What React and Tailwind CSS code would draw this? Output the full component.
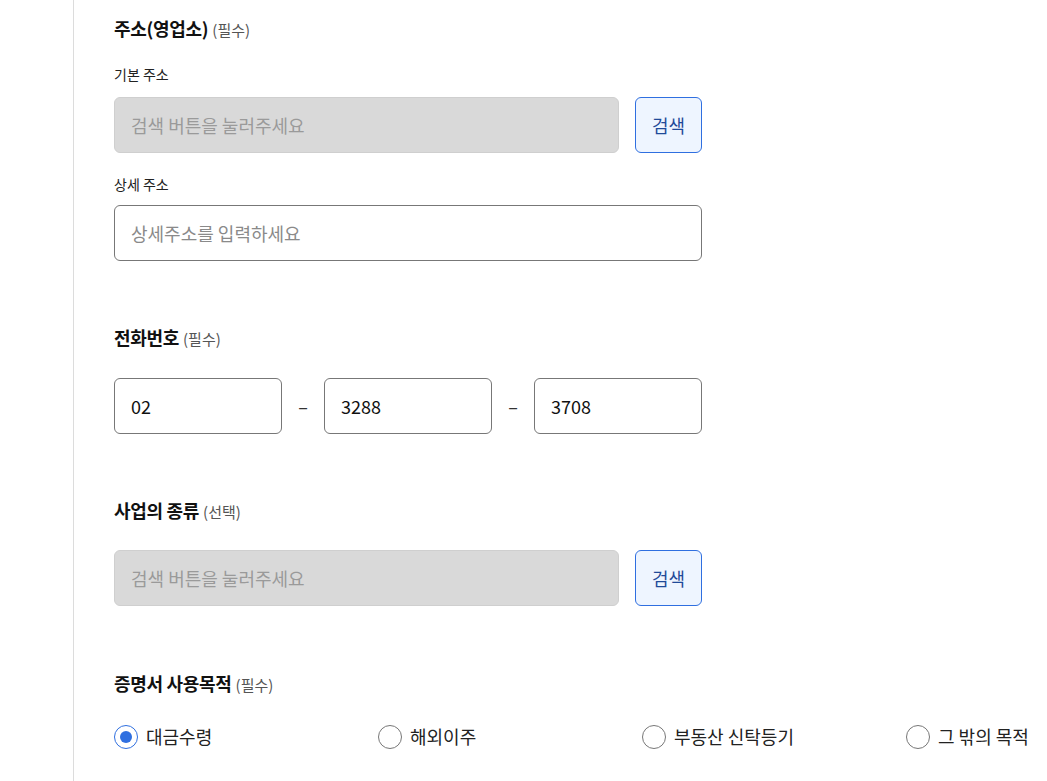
const FONT = { fontFamily: '"Noto Sans CJK KR", "Noto Sans", sans-serif' };

function SectionTitle({ title, note }) {
  return (
    <h3 className="flex items-baseline h-6 leading-6">
      <span className="text-[18px] font-bold text-[#111] tracking-[-0.3px]">{title}</span>
      <span className="ml-1 text-[15px] text-[#555]">{note}</span>
    </h3>
  );
}

function SearchRow({ placeholder }) {
  return (
    <div className="flex gap-4">
      <input
        disabled
        placeholder={placeholder}
        className="w-[505px] h-[56px] rounded-md border border-[#cfcfcf] bg-[#d9d9d9] px-4 text-[18px] placeholder:text-[#9a9a9a] outline-none"
      />
      <button className="w-[67px] h-[56px] rounded-md border border-[#2f6fe0] bg-[#eef5ff] text-[18px] text-[#1f4a99]">
        검색
      </button>
    </div>
  );
}

function Radio({ label, checked }) {
  return (
    <label className="flex items-center gap-2 text-[18px] text-[#222]">
      <span
        className={
          checked
            ? 'w-6 h-6 rounded-full border-[1.5px] border-[#2f6fe0] flex items-center justify-center bg-white'
            : 'w-6 h-6 rounded-full border-[1.5px] border-[#777] bg-white'
        }
      >
        {checked && <span className="w-3 h-3 rounded-full bg-[#2f6fe0]" />}
      </span>
      {label}
    </label>
  );
}

export default function App() {
  const phone = ['02', '3288', '3708'];
  const purposes = ['대금수령', '해외이주', '부동산 신탁등기', '그 밖의 목적'];

  return (
    <div className="w-[1047px] h-[781px] overflow-hidden bg-white" style={FONT}>
      <div className="ml-[73px] h-full border-l border-[#dcdcdc] pl-10 pt-[16px]">
        {/* 주소 */}
        <section>
          <SectionTitle title="주소(영업소)" note="(필수)" />
          <p className="mt-[24px] mb-[13px] h-5 leading-5 text-[14px] text-[#222]">기본 주소</p>
          <SearchRow placeholder="검색 버튼을 눌러주세요" />
          <p className="mt-[21px] mb-[11px] h-5 leading-5 text-[14px] text-[#222]">상세 주소</p>
          <input
            placeholder="상세주소를 입력하세요"
            className="w-[588px] h-[56px] rounded-md border border-[#777] bg-white px-4 text-[18px] placeholder:text-[#8a8a8a] outline-none"
          />
        </section>

        {/* 전화번호 */}
        <section className="mt-[64px]">
          <SectionTitle title="전화번호" note="(필수)" />
          <div className="mt-[29px] flex items-center">
            {phone.map((v, i) => (
              <div key={i} className="flex items-center">
                {i > 0 && <span className="w-[42px] text-center text-[18px] text-[#333]">–</span>}
                <input
                  defaultValue={v}
                  className="w-[168px] h-[56px] rounded-md border border-[#777] bg-white px-4 text-[18px] text-[#111] outline-none"
                />
              </div>
            ))}
          </div>
        </section>

        {/* 사업의 종류 */}
        <section className="mt-[64px]">
          <SectionTitle title="사업의 종류" note="(선택)" />
          <div className="mt-[28px]">
            <SearchRow placeholder="검색 버튼을 눌러주세요" />
          </div>
        </section>

        {/* 증명서 사용목적 */}
        <section className="mt-[65px]">
          <SectionTitle title="증명서 사용목적" note="(필수)" />
          <div className="mt-[28px] grid grid-cols-[264px_264px_264px_264px]">
            {purposes.map((p, i) => (
              <Radio key={p} label={p} checked={i === 0} />
            ))}
          </div>
        </section>
      </div>
    </div>
  );
}
